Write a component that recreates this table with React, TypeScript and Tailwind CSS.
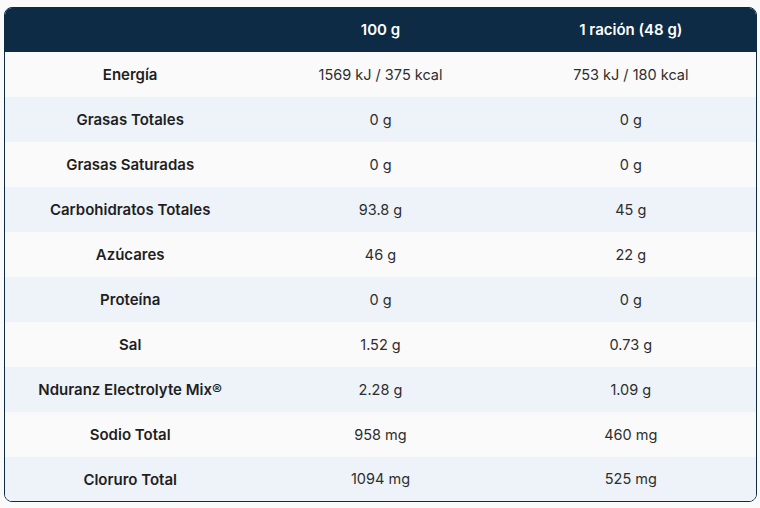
import React from "react";

const rows: [string, string, string][] = [
  ["Energía", "1569 kJ / 375 kcal", "753 kJ / 180 kcal"],
  ["Grasas Totales", "0 g", "0 g"],
  ["Grasas Saturadas", "0 g", "0 g"],
  ["Carbohidratos Totales", "93.8 g", "45 g"],
  ["Azúcares", "46 g", "22 g"],
  ["Proteína", "0 g", "0 g"],
  ["Sal", "1.52 g", "0.73 g"],
  ["Nduranz Electrolyte Mix®", "2.28 g", "1.09 g"],
  ["Sodio Total", "958 mg", "460 mg"],
  ["Cloruro Total", "1094 mg", "525 mg"],
];

export default function App() {
  return (
    <div
      className="w-[760px] h-[508px] bg-[#fafafa] pt-[7px] pl-[4px]"
      style={{ fontFamily: "Inter, 'Noto Sans', sans-serif" }}
    >
      <div className="w-[753px] rounded-[8px] border border-[#0d2b45] overflow-hidden">
        <div className="grid grid-cols-3 h-[44px] bg-[#0d2b45] text-white text-[15px] font-semibold">
          <div />
          <div className="flex items-center justify-center">100 g</div>
          <div className="flex items-center justify-center">1 ración (48 g)</div>
        </div>
        {rows.map((r, i) => (
          <div
            key={r[0]}
            className={`grid grid-cols-3 ${i === rows.length - 1 ? "h-[44px]" : "h-[45px]"} ${
              i % 2 === 0 ? "bg-[#fafafa]" : "bg-[#edf3f9]"
            }`}
          >
            <div className="flex items-center justify-center pt-[2px] text-[15px] font-semibold text-[#1f1f1f]">{r[0]}</div>
            <div className="flex items-center justify-center text-[14.5px] text-[#2e2e2e]">{r[1]}</div>
            <div className="flex items-center justify-center text-[14.5px] text-[#2e2e2e]">{r[2]}</div>
          </div>
        ))}
      </div>
    </div>
  );
}
